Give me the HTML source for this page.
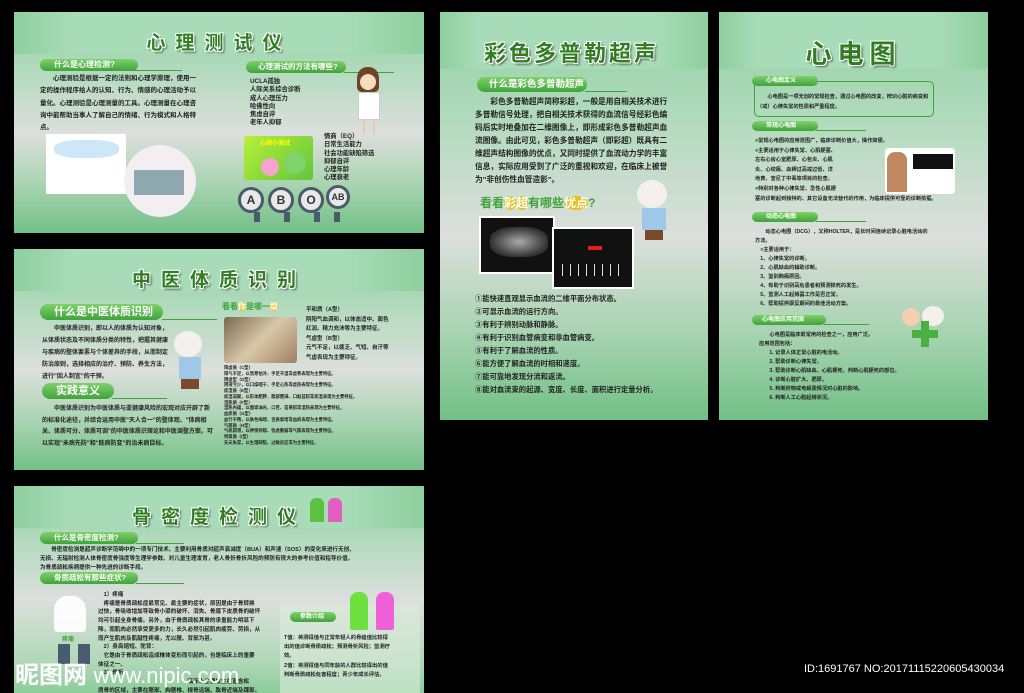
<!DOCTYPE html>
<html><head><meta charset="utf-8"><style>
*{margin:0;padding:0;box-sizing:border-box}
body{width:1024px;height:693px;background:#000;position:relative;overflow:hidden;font-family:"Liberation Sans","Noto Sans CJK SC",sans-serif;font-weight:bold;color:#222}
.p{position:absolute;overflow:hidden;background:linear-gradient(180deg,#8fd0a0 0%,#b0dabc 25%,#dcdfdc 55%,#a9d4b2 78%,#72c086 100%)}
.hd{position:absolute;left:0;top:0;right:0;height:19%;background:linear-gradient(90deg,#8fcf9f 0%,#a8dcb8 15%,#a8dcb8 80%,#8fcf9f 100%)}
.ttl{position:absolute;left:0;right:0;text-align:center;color:#2f7f22;font-weight:bold;text-shadow:-1px -1px 0 #fff,1px -1px 0 #fff,-1px 1px 0 #fff,1px 1px 0 #fff,2px 2px 2px #555}
.pill{position:absolute;background:linear-gradient(180deg,#7fd06a,#3fa43a);color:#fff;border-radius:0 8px 8px 8px;padding-left:12px;white-space:nowrap;border-top-left-radius:8px}
.ln{position:absolute;height:1px;background:#3fa43a}
.t{position:absolute;white-space:nowrap}
.b{position:absolute}
</style></head><body>

<!-- Panel 1 -->
<div class="p" style="left:14px;top:12px;width:410px;height:221px">
<div class="hd" style="height:42px"></div>
<div class="ttl" style="top:16px;font-size:19px;letter-spacing:10px">心理测试仪</div>
<div class="pill" style="left:26px;top:47px;width:98px;height:12px;font-size:8px;line-height:12px;padding-left:14px">什么是心理检测?</div>
<div class="ln" style="left:120px;top:58px;width:48px"></div>
<div class="t" style="left:26px;top:61px;font-size:6.5px;line-height:12.3px">&emsp;&emsp;心理测验是根据一定的法则和心理学原理，使用一<br>定的操作程序给人的认知、行为、情感的心理活动予以<br>量化。心理测验是心理测量的工具。心理测量在心理咨<br>询中能帮助当事人了解自己的情绪、行为模式和人格特<br>点。</div>
<div class="pill" style="left:232px;top:49px;width:100px;height:12px;font-size:7.5px;line-height:12px">心理测试的方法有哪些?</div>
<div class="ln" style="left:330px;top:60px;width:50px"></div>
<div class="t" style="left:236px;top:66px;font-size:6.3px;line-height:8.3px">UCLA孤独<br>人际关系综合诊断<br>成人心理压力<br>哈佛性向<br>焦虑自评<br>老年人抑郁</div>
<div class="t" style="left:310px;top:121px;font-size:6.3px;line-height:8.3px">情商（EQ）<br>日常生活能力<br>社会功能缺陷筛选<br>抑郁自评<br>心理年龄<br>心理衰老</div>
<div class="b" style="left:32px;top:122px;width:80px;height:60px;background:#fff"></div>
<div class="b" style="left:40px;top:128px;width:65px;height:18px;background:#cde6f8;border-radius:40%"></div>
<div class="b" style="left:110px;top:133px;width:72px;height:72px;background:#f3eef2;border-radius:50%"></div>
<div class="b" style="left:120px;top:158px;width:50px;height:25px;background:#8fa8b0"></div>
<div class="b" style="left:230px;top:124px;width:69px;height:44px;background:linear-gradient(135deg,#b8ef3a,#60c63a);border-radius:3px"></div>
<div class="t" style="left:246px;top:126px;font-size:6px;color:#ff0">心理小测试</div>
<div class="b" style="left:247px;top:146px;width:18px;height:18px;background:#f7a3d0;border-radius:50%"></div>
<div class="b" style="left:270px;top:140px;width:22px;height:22px;background:#7fd36a;border-radius:50%"></div>
<div class="b" style="left:343px;top:55px;width:22px;height:25px;background:#6a4526;border-radius:45% 45% 20% 20%"></div>
<div class="b" style="left:346px;top:62px;width:16px;height:16px;background:#f7dcc0;border-radius:50%"></div>
<div class="b" style="left:344px;top:80px;width:22px;height:28px;background:#fff;border:1px solid #ccc"></div>
<div class="b" style="left:349px;top:108px;width:12px;height:14px;border-left:2px solid #f2c9a8;border-right:2px solid #f2c9a8"></div>
<div class="b" style="left:224px;top:175px;width:26px;height:26px;border-radius:50%;background:#e8e8e8;border:3px solid #4a5a6a;font-size:12px;text-align:center;line-height:20px;color:#333">A</div>
<div class="b" style="left:254px;top:175px;width:26px;height:26px;border-radius:50%;background:#e8e8e8;border:3px solid #4a5a6a;font-size:12px;text-align:center;line-height:20px;color:#333">B</div>
<div class="b" style="left:284px;top:175px;width:26px;height:26px;border-radius:50%;background:#e8e8e8;border:3px solid #4a5a6a;font-size:12px;text-align:center;line-height:20px;color:#333">O</div>
<div class="b" style="left:312px;top:173px;width:24px;height:24px;border-radius:50%;background:#e8e8e8;border:3px solid #4a5a6a;font-size:9px;text-align:center;line-height:18px;color:#333">AB</div>
<div class="b" style="left:232px;top:200px;width:100px;height:10px;background:linear-gradient(90deg,transparent 8%,#4a5a6a 8%,#4a5a6a 14%,transparent 14%,transparent 38%,#4a5a6a 38%,#4a5a6a 44%,transparent 44%,transparent 68%,#4a5a6a 68%,#4a5a6a 74%,transparent 74%,transparent 88%,#4a5a6a 88%,#4a5a6a 94%,transparent 94%)"></div>
</div>

<!-- Panel 2 -->
<div class="p" style="left:14px;top:249px;width:410px;height:221px">
<div class="hd" style="height:42px"></div>
<div class="ttl" style="top:16px;font-size:19px;letter-spacing:10px">中医体质识别</div>
<div class="pill" style="left:26px;top:55px;width:123px;height:16px;font-size:11px;line-height:16px;padding-left:14px">什么是中医体质识别</div>
<div class="ln" style="left:148px;top:70px;width:55px"></div>
<div class="t" style="left:28px;top:74px;font-size:6px;line-height:12px">&emsp;&emsp;中医体质识别，即以人的体质为认知对象，<br>从体质状态及不同体质分类的特性，把握其健康<br>与疾病的整体要素与个体差异的手段，从而制定<br>防治原则，选择相应的治疗、预防、养生方法，<br>进行"因人制宜"的干预。</div>
<div class="pill" style="left:28px;top:134px;width:72px;height:16px;font-size:11px;line-height:16px;padding-left:14px">实践意义</div>
<div class="ln" style="left:98px;top:149px;width:55px"></div>
<div class="t" style="left:28px;top:155px;font-size:6px;line-height:11.5px">&emsp;&emsp;中医体质识别为中医体质与亚健康风险的宏观对应开辟了新<br>的标准化途径，并综合运用中医"天人合一"的整体观、"体病相<br>关、体质可分、体质可调"的中医体质识理论和中医调整方案。可<br>以实现"未病先防"和"既病防变"的治未病目标。</div>
<div class="b" style="left:160px;top:82px;width:28px;height:26px;background:#f4f0ee;border-radius:50%"></div>
<div class="b" style="left:165px;top:108px;width:22px;height:22px;background:#9fc8e8"></div>
<div class="b" style="left:167px;top:130px;width:18px;height:10px;background:#7a4a2a"></div>
<div class="t" style="left:208px;top:52px;font-size:8px;color:#3fa43a">看看<span style="background:#f0c020;color:#fff;border-radius:50%">你</span>是哪一<span style="background:#f0c020;color:#fff;border-radius:50%">型</span></div>
<div class="b" style="left:210px;top:68px;width:73px;height:46px;background:linear-gradient(135deg,#7a6a50,#d8c8a8 50%,#a08060);border-radius:3px"></div>
<div class="t" style="left:292px;top:57px;font-size:5.5px;line-height:9.5px">平和质（A型）<br>阴阳气血调和，以体态适中、面色<br>红润、精力充沛等为主要特征。<br>气虚型（B型）<br>元气不足，以疲乏、气短、自汗等<br>气虚表现为主要特征。</div>
<div class="t" style="left:210px;top:116px;font-size:4.3px;line-height:5.75px">阳虚质（C型）<br>阳气不足，以畏寒怕冷、手足不温等虚寒表现为主要特征。<br>阴虚型（D型）<br>阴液亏少，以口燥咽干、手足心热等虚热表现为主要特征。<br>痰湿质（E型）<br>痰湿凝聚，以形体肥胖、腹部肥满、口黏苔腻等痰湿表现为主要特征。<br>湿热质（F型）<br>湿热内蕴，以面垢油光、口苦、苔黄腻等湿热表现为主要特征。<br>血瘀质（G型）<br>血行不畅，以肤色晦暗、舌质紫暗等血瘀表现为主要特征。<br>气郁质（H型）<br>气机郁滞，以神情抑郁、忧虑脆弱等气郁表现为主要特征。<br>特禀质（I型）<br>先天失常，以生理缺陷、过敏反应等为主要特征。</div>
</div>

<!-- Panel 3 -->
<div class="p" style="left:14px;top:486px;width:410px;height:207px;background:linear-gradient(180deg,#8fd0a0 0%,#b0dabc 25%,#dcdfdc 55%,#b0d8b8 85%,#8ccc9a 100%)">
<div class="hd" style="height:42px"></div>
<div class="ttl" style="top:16px;font-size:19px;letter-spacing:10px">骨密度检测仪</div>
<div class="b" style="left:296px;top:12px;width:14px;height:24px;background:#5cc040;border-radius:6px 6px 0 0"></div>
<div class="b" style="left:314px;top:12px;width:14px;height:24px;background:#e060c0;border-radius:6px 6px 0 0"></div>
<div class="pill" style="left:26px;top:46px;width:98px;height:12px;font-size:7.5px;line-height:12px;padding-left:14px">什么是骨密度检测?</div>
<div class="ln" style="left:122px;top:57px;width:48px"></div>
<div class="t" style="left:26px;top:60px;font-size:5.6px;line-height:9px">&emsp;&emsp;骨密度检测是超声诊断学范畴中的一项专门技术。主要利用骨质对超声衰减度（BUA）和声速（SOS）的变化来进行无创、<br>无损、无辐射检测人体骨密度骨强度等生理学参数。对儿童生理发育，老人骨折骨折风险的预防有很大的参考价值和指导价值。<br>为骨质疏松疾病提供一种先进的诊断手段。</div>
<div class="pill" style="left:26px;top:86px;width:98px;height:12px;font-size:7.5px;line-height:12px;padding-left:14px">骨质疏松有那些症状?</div>
<div class="ln" style="left:122px;top:97px;width:48px"></div>
<div class="b" style="left:40px;top:110px;width:32px;height:36px;background:#fff;border-radius:40% 40% 10% 10%;opacity:.9"></div>
<div class="t" style="left:48px;top:148px;font-size:6px;color:#3fa43a">疼痛</div>
<div class="b" style="left:44px;top:158px;width:12px;height:20px;background:#4a5a70"></div>
<div class="b" style="left:64px;top:158px;width:12px;height:20px;background:#4a5a70"></div>
<div class="t" style="left:84px;top:105px;font-size:5.6px;line-height:8.7px">&emsp;1）疼痛<br>&emsp;疼痛是骨质疏松症最常见、最主要的症状，原因是由于骨转换<br>过快，骨吸收增加导致骨小梁的破坏、消失、骨膜下皮质骨的破坏<br>均可引起全身骨痛。另外，由于骨质疏松其骨的承重能力明显下<br>降，而肌肉必然承受更多的力，长久必然引起肌肉疲劳、劳损，从<br>而产生肌肉及肌腱性疼痛，尤以腰、背部为甚。<br>&emsp;2）身高缩短、驼背：<br>&emsp;它是由于骨质疏松造成椎体变形而引起的，也是临床上的重要<br>体征之一。<br>&emsp;3）骨折<br>&emsp;&emsp;&emsp;&emsp;&emsp;&emsp;&emsp;&emsp;&emsp;&emsp;&emsp;&emsp;&emsp;&emsp;&emsp;&emsp;临床上主要发生在富含松<br>质骨的区域，主要在腰部、胸腰椎、桡骨远端、肱骨近端及踝部。</div>
<div class="b" style="left:266px;top:118px;width:140px;height:89px;background:rgba(220,235,220,.6)"></div>
<div class="pill" style="left:276px;top:126px;width:46px;height:10px;font-size:6px;line-height:10px;padding-left:10px">参数介绍</div>
<div class="t" style="left:270px;top:148px;font-size:5.3px;line-height:9.2px">T值：将测得值与正常年轻人的骨峰值比较得<br>出的值诊断骨质疏松；预测骨折风险；监测疗<br>效。<br>Z值：将测得值与同年龄的人群比较得出的值<br>判断骨质疏松危害程度；青少年成长评估。</div>
<div class="b" style="left:336px;top:106px;width:18px;height:38px;background:#6ee040;border-radius:8px 8px 2px 2px"></div>
<div class="b" style="left:362px;top:106px;width:18px;height:38px;background:#f060d8;border-radius:8px 8px 2px 2px"></div>
<div class="t" style="left:1px;top:176px;font-size:24px;color:#fff;line-height:28px">昵图网 <span style="font-family:'Liberation Sans';font-weight:normal;font-size:22px">www.nipic.com</span></div>
</div>

<!-- Panel 4 -->
<div class="p" style="left:440px;top:12px;width:268px;height:408px">
<div class="hd" style="height:57px"></div>
<div class="ttl" style="top:24px;font-size:22px;letter-spacing:3px;text-align:left;left:44px">彩色多普勒超声</div>
<div class="pill" style="left:37px;top:65px;width:110px;height:15px;font-size:9.5px;line-height:15px">什么是彩色多普勒超声</div>
<div class="ln" style="left:145px;top:79px;width:42px"></div>
<div class="t" style="left:35px;top:83px;font-size:7.7px;line-height:13px">&emsp;&emsp;彩色多普勒超声简称彩超，一般是用自相关技术进行<br>多普勒信号处理，把自相关技术获得的血流信号经彩色编<br>码后实时地叠加在二维图像上，即形成彩色多普勒超声血<br>流图像。由此可见，彩色多普勒超声（即彩超）既具有二<br>维超声结构图像的优点，又同时提供了血流动力学的丰富<br>信息，实际应用受到了广泛的重视和欢迎，在临床上被誉<br>为"非创伤性血管造影"。</div>
<div class="t" style="left:40px;top:182px;font-size:12px;color:#3fa43a">看看<span style="background:#e8c020;color:#fff;border-radius:50%">彩</span><span style="background:#e8c020;color:#fff;border-radius:50%">超</span>有哪些<span style="background:#e8c020;color:#fff;border-radius:50%">优点</span>?</div>
<div class="b" style="left:39px;top:204px;width:76px;height:58px;background:#111;border:2px solid #fff"></div>
<div class="b" style="left:50px;top:215px;width:58px;height:30px;background:radial-gradient(ellipse,#aaa,#333 70%);border-radius:40%"></div>
<div class="b" style="left:112px;top:215px;width:82px;height:62px;background:#111;border:2px solid #fff"></div>
<div class="b" style="left:122px;top:252px;width:62px;height:12px;background:repeating-linear-gradient(90deg,#ddd 0 1px,transparent 1px 8px)"></div>
<div class="b" style="left:148px;top:234px;width:14px;height:4px;background:#e02020"></div>
<div class="b" style="left:197px;top:168px;width:30px;height:28px;background:#f4f0ee;border-radius:50%"></div>
<div class="b" style="left:202px;top:196px;width:24px;height:22px;background:#9fc8e8"></div>
<div class="b" style="left:205px;top:218px;width:18px;height:10px;background:#7a4a2a"></div>
<div class="t" style="left:35px;top:280px;font-size:7.3px;line-height:13px">①能快速直观显示血流的二维平面分布状态。<br>②可显示血流的运行方向。<br>③有利于辨别动脉和静脉。<br>④有利于识别血管病变和非血管病变。<br>⑤有利于了解血流的性质。<br>⑥能方便了解血流的时相和速度。<br>⑦能可靠地发现分流和返流。<br>⑧能对血流束的起源、宽度、长度、面积进行定量分析。</div>
</div>

<!-- Panel 5 -->
<div class="p" style="left:719px;top:12px;width:269px;height:408px">
<div class="hd" style="height:57px"></div>
<div class="ttl" style="top:22px;font-size:26px;letter-spacing:6px">心电图</div>
<div class="b" style="left:35px;top:69px;width:180px;height:36px;border:1.5px solid #3fa43a;border-radius:5px"></div>
<div class="pill" style="left:33px;top:64px;width:66px;height:10px;font-size:6px;line-height:10px;padding-left:14px">心电图定义</div>
<div class="t" style="left:38px;top:80px;font-size:5.2px;line-height:10px">&emsp;&emsp;心电图是一项无创的常规检查，通过心电图的改变，辨识心脏的病变和<br>（或）心律失常的性质和严重程度。</div>
<div class="pill" style="left:33px;top:109px;width:66px;height:10px;font-size:6px;line-height:10px;padding-left:14px">常规心电图</div>
<div class="ln" style="left:97px;top:118px;width:50px"></div>
<div class="t" style="left:36px;top:125px;font-size:5.2px;line-height:9.6px"><span style="color:#3fa43a">■</span>常规心电图的应用范围广，临床诊断价值大，操作简便。<br><span style="color:#3fa43a">■</span>主要适用于心律失常、心肌梗塞、<br>左右心房心室肥厚、心包炎、心肌<br>炎、心绞痛、血钾过高或过低、洋<br>地黄、奎尼丁中毒等项目的检查。<br><span style="color:#3fa43a">■</span>特别对各种心律失常、急性心肌梗<br>塞的诊断起到独特的、其它设备无法替代的作用，为临床提供可靠的诊断依据。</div>
<div class="b" style="left:166px;top:136px;width:70px;height:46px;background:#fff;border-radius:4px"></div>
<div class="b" style="left:168px;top:140px;width:20px;height:40px;background:#c08860;border-radius:8px 8px 0 0"></div>
<div class="b" style="left:194px;top:142px;width:40px;height:15px;background:#111"></div>
<div class="pill" style="left:33px;top:200px;width:66px;height:10px;font-size:6px;line-height:10px;padding-left:14px">动态心电图</div>
<div class="ln" style="left:97px;top:209px;width:50px"></div>
<div class="t" style="left:36px;top:216px;font-size:5.2px;line-height:9px">&emsp;&emsp;动态心电图（DCG），又称HOLTER，是长时间连续记录心脏电活动的<br>方法。<br>&emsp;<span style="color:#3fa43a">■</span>主要适用于：<br>&emsp;1、心律失常的诊断。<br>&emsp;2、心肌缺血的辅助诊断。<br>&emsp;3、鉴别胸痛原因。<br>&emsp;4、有助于识别高危患者和预测猝死的发生。<br>&emsp;5、监测人工起搏器工作是否正常。<br>&emsp;6、帮助提供康复期间的最佳活动方案。</div>
<div class="pill" style="left:33px;top:303px;width:74px;height:10px;font-size:6px;line-height:10px;padding-left:10px">心电图应用范围</div>
<div class="ln" style="left:105px;top:312px;width:45px"></div>
<div class="t" style="left:40px;top:319px;font-size:5.2px;line-height:9px">&emsp;&emsp;心电图是临床最常用的检查之一，应用广泛。<br>应用范围包括：<br>&emsp;&emsp;1. 记录人体正常心脏的电活动。<br>&emsp;&emsp;2. 帮助诊断心律失常。<br>&emsp;&emsp;3. 帮助诊断心肌缺血、心肌梗死、判断心肌梗死的部位。<br>&emsp;&emsp;4. 诊断心脏扩大、肥厚。<br>&emsp;&emsp;5. 判断药物或电解质情况对心脏的影响。<br>&emsp;&emsp;6. 判断人工心脏起搏状况。</div>
<div class="b" style="left:183px;top:296px;width:18px;height:18px;background:#f2d0b0;border-radius:50%"></div>
<div class="b" style="left:203px;top:294px;width:22px;height:20px;background:#f4f0ee;border-radius:50%"></div>
<div class="b" style="left:193px;top:318px;width:26px;height:8px;background:#4cb040"></div>
<div class="b" style="left:202px;top:309px;width:8px;height:26px;background:#4cb040"></div>
</div>

<div class="t" style="left:804px;top:663px;font-size:11px;color:#fff;font-weight:normal">ID:1691767 NO:20171115220605430034</div>
</body></html>
